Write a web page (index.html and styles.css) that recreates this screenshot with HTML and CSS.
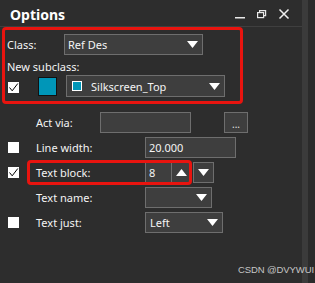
FILE: index.html
```html
<!DOCTYPE html>
<html>
<head>
<meta charset="utf-8">
<link rel="stylesheet" href="styles.css">
</head>
<body>
<div class="window">
  <div class="main">
    <header class="titlebar">
      <span class="title">Options</span>
      <div class="controls">
        <svg class="ctl" width="12" height="12" viewBox="0 0 12 12"><rect x="1" y="9" width="10" height="1.5" fill="#e8e8e8"/></svg>
        <svg class="ctl" width="12" height="12" viewBox="0 0 12 12" fill="none" stroke="#e8e8e8" stroke-width="1.2"><rect x="1.6" y="4.6" width="6" height="5"/><path d="M3.6 4.6 V2.6 H9.6 V7.6 H7.6"/></svg>
        <svg class="ctl" width="12" height="12" viewBox="0 0 12 12" stroke="#f0f0f0" stroke-width="1.5"><path d="M1.5 1.5 L10.5 10.5 M10.5 1.5 L1.5 10.5"/></svg>
      </div>
    </header>
    <div class="content">
      <div class="hl-group">
        <div class="g-row">
          <span class="g-label">Class:</span>
          <div class="select sel-class"><span class="val">Ref Des</span><svg class="arrow" width="11" height="7" viewBox="0 0 11 7"><polygon points="0,0 11,0 5.5,7" fill="#fff"/></svg></div>
        </div>
        <div class="g-sub">New subclass:</div>
        <div class="g-row">
          <span class="cb-cell"><span class="cb"><svg width="11" height="11" viewBox="0 0 11 11"><path d="M1.5 5.5 L4.2 8.8 L9.8 1.5" fill="none" stroke="#000" stroke-width="1"/></svg></span></span>
          <span class="swatch"></span>
          <div class="select sel-sub"><span class="mini"></span><span class="val">Silkscreen_Top</span><svg class="arrow" width="11" height="7" viewBox="0 0 11 7"><polygon points="0,0 11,0 5.5,7" fill="#fff"/></svg></div>
        </div>
      </div>

      <div class="form">
        <div class="row">
          <span class="cb-cell"></span>
          <span class="label lbl-act">Act via:</span>
          <div class="field w-act"></div>
          <div class="btn-dots">...</div>
        </div>
        <div class="row">
          <span class="cb-cell"><span class="cb"></span></span>
          <span class="label">Line width:</span>
          <div class="field w-line"><span class="val">20.000</span></div>
        </div>
        <div class="row">
          <span class="cb-cell"><span class="cb"><svg width="11" height="11" viewBox="0 0 11 11"><path d="M1.5 5.5 L4.2 8.8 L9.8 1.5" fill="none" stroke="#000" stroke-width="1"/></svg></span></span>
          <span class="label">Text block:</span>
          <div class="spin">
            <span class="val spin-val">8</span>
            <span class="spin-up"><svg width="11" height="7" viewBox="0 0 11 7"><polygon points="0,7 11,7 5.5,0" fill="#fff"/></svg></span>
          </div>
          <div class="spin-down"><svg width="11" height="7" viewBox="0 0 11 7"><polygon points="0,0 11,0 5.5,7" fill="#fff"/></svg></div>
          <div class="hl-box"></div>
        </div>
        <div class="row">
          <span class="cb-cell"></span>
          <span class="label">Text name:</span>
          <div class="select w-name"><span class="val"></span><svg class="arrow" width="11" height="7" viewBox="0 0 11 7"><polygon points="0,0 11,0 5.5,7" fill="#fff"/></svg></div>
        </div>
        <div class="row">
          <span class="cb-cell"><span class="cb"></span></span>
          <span class="label">Text just:</span>
          <div class="select w-just"><span class="val">Left</span><svg class="arrow" width="11" height="7" viewBox="0 0 11 7"><polygon points="0,0 11,0 5.5,7" fill="#fff"/></svg></div>
        </div>
      </div>
    </div>
  </div>
  <div class="strip"></div>
  <div class="edge"></div>
  <div class="watermark">CSDN @DVYWUI</div>
</div>
</body>
</html>
```

FILE: styles.css
```css
* { box-sizing: border-box; }
html, body { margin: 0; padding: 0; }
body {
  width: 315px;
  height: 283px;
  overflow: hidden;
  background: #2d2d2d;
  font-family: "Noto Sans", "Open Sans", sans-serif;
  font-size: 11px;
  color: #f4f4f4;
}
.window {
  position: relative;
  display: flex;
  width: 315px;
  height: 283px;
}
.main {
  width: 302px;
  display: flex;
  flex-direction: column;
}
.strip { width: 6px; background: #3b3b3b; }
.edge { flex: 1; background: #2b2b2b; }

.titlebar {
  height: 27px;
  border-bottom: 1px solid #3f3f3f;
  display: flex;
  align-items: center;
  justify-content: space-between;
  padding: 2px 0 0 10px;
}
.title {
  font-weight: bold;
  font-size: 14px;
  color: #ffffff;
}
.controls {
  display: flex;
  gap: 10px;
  padding-right: 12px;
  align-items: center;
}
.ctl { display: block; }

.content { display: flex; flex-direction: column; }

.hl-group {
  margin-left: 2px;
  width: 241px;
  height: 77px;
  border: 3px solid #e8140f;
  border-radius: 4px;
  padding: 4px 0 0 2px;
  display: flex;
  flex-direction: column;
}
.g-row { display: flex; align-items: center; }
.g-label { width: 57px; line-height: 16px; }
.g-sub { line-height: 16px; margin-top: 4px; height: 16px; }

.select, .field, .spin, .btn-dots, .spin-down {
  height: 21px;
  background: #3e3e3e;
  border: 1px solid #6e6e6e;
  display: flex;
  align-items: center;
}
.select { justify-content: space-between; padding: 0 4px 0 3px; }
.val { white-space: nowrap; }
.arrow { display: block; flex: none; }
.sel-class { width: 139px; }
.sel-sub { width: 159px; height: 22px; justify-content: flex-start; padding-left: 5px; }
.sel-sub .arrow { margin-left: auto; }
.mini {
  width: 10px;
  height: 10px;
  border: 1px solid #ffffff;
  background: #0096b8;
  margin-right: 9px;
  flex: none;
}
.cb-cell {
  width: 36px;
  padding-left: 8px;
  display: flex;
  align-items: center;
  flex: none;
}
.hl-group .cb-cell { width: 31px; padding-left: 1px; margin-top: 2px; }
.cb {
  width: 11px;
  height: 11px;
  background: #ffffff;
  display: block;
}
.cb svg { display: block; }
.swatch {
  width: 19px;
  height: 19px;
  border: 1px solid #111;
  background: #0096b8;
  margin-right: 9px;
  flex: none;
}

.form {
  margin-top: 8px;
  display: flex;
  flex-direction: column;
  gap: 4px;
}
.row {
  position: relative;
  display: flex;
  align-items: center;
  height: 21px;
}
.label { width: 109px; flex: none; line-height: 16px; }
.lbl-act { width: 64px; }
.w-act { width: 91px; }
.btn-dots {
  width: 24px;
  margin-left: 33px;
  justify-content: center;
  font-size: 10px;
  color: #e0e0e0;
  padding-top: 2px;
}
.field { padding-left: 3px; }
.w-line { width: 91px; }
.spin { width: 46px; padding-left: 3px; }
.spin-val { flex: 1; }
.spin-up {
  width: 19px;
  height: 100%;
  border-left: 1px solid #6e6e6e;
  display: flex;
  align-items: center;
  justify-content: center;
}
.spin-up svg, .spin-down svg { display: block; }
.spin-down {
  width: 21px;
  margin-left: 2px;
  justify-content: center;
}
.hl-box {
  position: absolute;
  left: 27px;
  top: -2px;
  width: 165px;
  height: 25px;
  border: 3px solid #e8140f;
  border-radius: 4px;
  pointer-events: none;
}
.w-name { width: 67px; }
.w-just { width: 78px; padding-left: 4px; }

.watermark {
  position: absolute;
  left: 238px;
  top: 264px;
  font-family: "Liberation Sans", Arial, sans-serif;
  font-size: 9.5px;
  color: #c6c6c6;
  letter-spacing: -0.1px;
  white-space: nowrap;
}
```
